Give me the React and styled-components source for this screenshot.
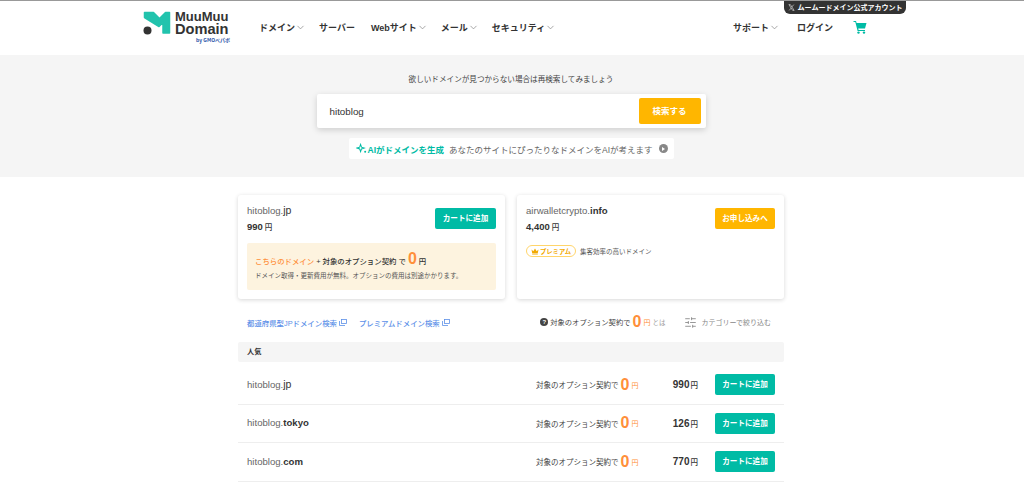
import React from "react";
import styled, { createGlobalStyle } from "styled-components";
import { ChevronDown, SlidersHorizontal } from "lucide-react";

const FONT = `"Noto Sans CJK JP", "Liberation Sans", sans-serif`;
const TEAL = "#00bba5";
const AMBER = "#ffb600";
const ORANGE = "#ff8f3a";

const GlobalStyle = createGlobalStyle`
  html, body { margin: 0; padding: 0; background: #fff; }
  body { font-family: "Liberation Sans", ${FONT}; color: #333; overflow: hidden; }
  * { box-sizing: border-box; }
`;

const Page = styled.div`
  width: 1024px;
  height: 484px;
  overflow: hidden;
  border-top: 1px solid #999;
`;

const Header = styled.header`
  position: relative;
  height: 54px;
  display: flex;
  align-items: center;
  padding: 0 157px 2px 142px;
`;

const XBanner = styled.a`
  position: absolute;
  top: 0;
  left: 784px;
  width: 122px;
  height: 13px;
  background: #333;
  border-radius: 0 0 6px 6px;
  color: #fff;
  font-size: 7px;
  font-weight: 700;
  line-height: 13px;
  text-align: center;
  white-space: nowrap;
`;

const LogoWrap = styled.div`
  display: flex;
  align-items: flex-start;
  justify-content: flex-start;
  width: 117px;
  height: 32px;
  gap: 4px;
  svg { margin-left: 1px; flex: none; }
`;

const LogoText = styled.div`
  display: flex;
  flex-direction: column;
  width: 55px;
  color: #333;
  font-weight: 700;
  font-family: "Liberation Sans", sans-serif;
`;

const LogoLine = styled.span`
  font-size: ${(p) => p.$size}px;
  line-height: 12px;
  white-space: nowrap;
`;

const LogoBy = styled.span`
  margin-top: 2px;
  font-size: 5px;
  line-height: 6px;
  text-align: right;
  white-space: nowrap;
  color: #2a54a8;
  font-family: ${FONT};
`;

const Nav = styled.nav`
  display: flex;
  align-items: center;
  gap: 16px;
  flex: 1;
`;

const NavItem = styled.a`
  display: flex;
  align-items: center;
  gap: 0;
  font-size: 9px;
  font-weight: 700;
  color: #333;
  white-space: nowrap;
  svg { color: #888; margin-right: -3px; }
`;

const NavRight = styled.nav`
  display: flex;
  align-items: center;
  gap: 20px;
`;

const SearchBand = styled.section`
  height: 122px;
  background: #f5f5f5;
  display: flex;
  flex-direction: column;
  align-items: center;
  padding: 19px 2px 0 0;
`;

const SearchLead = styled.p`
  margin: 0 0 8px;
  font-size: 7.6px;
  line-height: 12px;
  color: #444;
`;

const SearchBox = styled.div`
  width: 389px;
  height: 34px;
  background: #fff;
  border-radius: 2px;
  box-shadow: 0 2px 6px rgba(0, 0, 0, 0.16);
  display: flex;
  align-items: center;
  justify-content: space-between;
  padding: 0 5px 0 13px;
  font-size: 9.8px;
  color: #333;
`;

const Button = styled.button`
  border: 0;
  border-radius: 2px;
  background: ${(p) => (p.$amber ? AMBER : TEAL)};
  color: #fff;
  font-family: ${FONT};
  font-weight: 700;
  font-size: ${(p) => p.$size || 7.6}px;
  width: ${(p) => p.$w || 60}px;
  height: ${(p) => p.$h || 21}px;
  padding: 0 0 2px;
  white-space: nowrap;
  flex: none;
`;

const AiBanner = styled.div`
  margin-top: 10px;
  width: 325px;
  height: 21px;
  background: #fff;
  border-radius: 2px;
  display: flex;
  align-items: center;
  padding: 0 6px 0 7px;
  font-size: 8.5px;
  color: #666;
  white-space: nowrap;
`;

const AiLabel = styled.b`
  display: flex;
  align-items: center;
  gap: 1px;
  color: ${TEAL};
  margin-right: 5px;
`;

const AiArrow = styled.span`
  margin-left: auto;
  width: 9px;
  height: 9px;
  border-radius: 50%;
  background: #888;
  display: flex;
  align-items: center;
  justify-content: center;
  &::after {
    content: "";
    border-left: 3px solid #fff;
    border-top: 2px solid transparent;
    border-bottom: 2px solid transparent;
  }
`;

const Main = styled.main`
  width: 546px;
  margin: 18px 0 0 238px;
`;

const Cards = styled.div`
  display: grid;
  grid-template-columns: 267px 267px;
  gap: 12px;
`;

const Card = styled.article`
  height: 104px;
  border-radius: 3px;
  background: #fff;
  box-shadow: 0 1px 4px rgba(0, 0, 0, 0.16);
  padding: 8px 9px 0;
`;

const CardTop = styled.div`
  display: flex;
  justify-content: space-between;
  align-items: center;
  height: 30px;
`;

const Domain = styled.div`
  font-size: 9.6px;
  line-height: 14px;
  color: #666;
  b { color: #333; font-weight: 700; }
  ${(p) => p.$plain && "b { font-weight: 400; font-size: 10.5px; }"}
`;

const Price = styled.div`
  font-size: 9.5px;
  font-weight: 700;
  line-height: 14px;
  margin-top: 2px;
  color: #333;
  span { font-size: 7.5px; font-weight: 500; font-family: ${FONT}; margin-left: 2px; }
`;

const CardName = styled(Domain)`
  margin-top: 1px;
`;

const PromoBox = styled.div`
  margin-top: 10px;
  height: 47px;
  background: #fdf3df;
  border-radius: 2px;
  padding: 9px 8px;
`;

const PromoLine = styled.div`
  display: flex;
  align-items: baseline;
  font-size: 7.4px;
  line-height: 14px;
  font-weight: 500;
  color: #333;
  white-space: nowrap;
`;

const PromoAccent = styled.span`
  color: ${ORANGE};
  margin-right: 2px;
`;

const Zero = styled.b`
  color: ${ORANGE};
  font-size: ${(p) => p.$size || 16}px;
  font-family: "Liberation Sans", sans-serif;
  margin: 0 2px;
  line-height: 14px;
`;

const PromoNote = styled.p`
  margin: 2px 0 0;
  font-size: 6.5px;
  line-height: 10px;
  color: #555;
  white-space: nowrap;
`;

const PremiumRow = styled.div`
  display: flex;
  align-items: center;
  gap: 4px;
  margin-top: 12px;
  font-size: 6.5px;
  color: #555;
`;

const PremiumBadge = styled.span`
  display: flex;
  align-items: center;
  gap: 1px;
  height: 12px;
  padding: 0 4px;
  border: 1px solid #ffd56b;
  border-radius: 6px;
  color: #f2a900;
  font-size: 6.3px;
  font-weight: 700;
  background: #fff;
`;

const FilterBar = styled.div`
  display: flex;
  align-items: center;
  justify-content: space-between;
  height: 43px;
  padding: 3px 13px 0 9px;
`;

const LinkGroup = styled.div`
  display: flex;
  gap: 12px;
`;

const TextLink = styled.a`
  display: flex;
  align-items: center;
  gap: 2px;
  font-size: 7.4px;
  font-weight: 500;
  color: #5c90e8;
  white-space: nowrap;
`;

const FilterRight = styled.div`
  display: flex;
  align-items: center;
  gap: 19px;
`;

const ZeroHelp = styled.div`
  display: flex;
  align-items: center;
  font-size: 7.3px;
  color: #444;
  white-space: nowrap;
`;

const HelpIcon = styled.span`
  width: 8px;
  height: 8px;
  border-radius: 50%;
  background: #444;
  color: #fff;
  font-size: 6px;
  font-weight: 700;
  line-height: 8px;
  text-align: center;
  margin-right: 2px;
`;

const Yen = styled.span`
  color: ${ORANGE};
  font-size: 7px;
`;

const Muted = styled.span`
  color: #999;
  font-size: 6.5px;
  margin-left: 2px;
`;

const CategoryFilter = styled.div`
  display: flex;
  align-items: center;
  gap: 4px;
  font-size: 7px;
  color: #888;
  white-space: nowrap;
`;

const SectionLabel = styled.div`
  height: 20px;
  margin-bottom: 4px;
  background: #f5f5f5;
  border-radius: 2px;
  padding: 0 9px;
  font-size: 7.2px;
  font-weight: 700;
  line-height: 20px;
  color: #333;
`;

const Row = styled.div`
  display: flex;
  align-items: center;
  height: 38.5px;
  padding: 0 9px;
  border-bottom: 1px solid #eee;
`;

const RowDomain = styled(Domain)`
  flex: 1;
`;

const RowOption = styled.div`
  display: flex;
  align-items: center;
  width: 101px;
  font-size: 7.5px;
  color: #444;
  white-space: nowrap;
`;

const RowPrice = styled.div`
  width: 78px;
  text-align: right;
  padding-right: 17px;
  font-size: 10px;
  font-weight: 700;
  color: #333;
  white-space: nowrap;
  span { font-size: 7.5px; font-family: ${FONT}; font-weight: 500; margin-left: 1px; }
`;

const LogoMark = () => (
  <svg width="28" height="24" viewBox="-0.5 -0.5 28 24" aria-hidden="true">
    <path
      d="M1 1 H10 L16 7 L22 1 H26 V21.5 H19.5 V11 L15.5 15 L1 6 Z"
      fill="#22c3ad"
      stroke="#22c3ad"
      strokeWidth="1.5"
      strokeLinejoin="round"
    />
    <circle cx="4" cy="19" r="4" fill="#333" />
  </svg>
);

const CartIcon = () => (
  <svg width="14" height="14" viewBox="0 0 14 14" aria-hidden="true">
    <path d="M0.5 1 H3 L3.6 3 H13.5 L12 8.5 H5.2 L5.6 10 H12 V11 H4.6 L2.3 2 H0.5 Z" fill={TEAL} />
    <circle cx="5.5" cy="12.6" r="1.2" fill={TEAL} />
    <circle cx="11" cy="12.6" r="1.2" fill={TEAL} />
  </svg>
);

const XGlyph = () => (
  <svg width="7" height="7" viewBox="0 0 24 24" style={{ marginRight: 3, verticalAlign: -1 }} aria-hidden="true">
    <path d="M3 2h5l13 20h-5zM20 2l-7.5 8.5M4 22l7.5-8.5" stroke="#ccc" strokeWidth="2.5" fill="none" />
  </svg>
);

const Sparkle = () => (
  <svg width="11" height="11" viewBox="0 0 12 12" aria-hidden="true">
    <path d="M5 1.5 L6 4.5 L9 5.5 L6 6.5 L5 9.5 L4 6.5 L1 5.5 L4 4.5 Z" fill="none" stroke={TEAL} strokeWidth="1.1" />
    <circle cx="10" cy="9.5" r="1.1" fill={TEAL} />
  </svg>
);

const CrownIcon = () => (
  <svg width="8" height="7" viewBox="0 0 8 7" aria-hidden="true">
    <path d="M0.5 1.5 L2.3 3.2 L4 0.5 L5.7 3.2 L7.5 1.5 L6.8 5 H1.2 Z M1.2 5.6 H6.8 V6.5 H1.2 Z" fill="#f2a900" />
  </svg>
);

const ExternalIcon = () => (
  <svg width="8" height="7" viewBox="0 0 8 7" aria-hidden="true">
    <rect x="2.5" y="0.5" width="5" height="4" fill="none" stroke="#5c90e8" strokeWidth="0.8" />
    <path d="M0.5 2 V6.5 H6" fill="none" stroke="#5c90e8" strokeWidth="0.8" />
  </svg>
);

const Chevron = () => <ChevronDown size={11} strokeWidth={1.6} />;

const NAV = [
  ["ドメイン", true],
  ["サーバー", false],
  ["Webサイト", true],
  ["メール", true],
  ["セキュリティ", true],
];

const ROWS = [
  ["jp", "990"],
  ["tokyo", "126"],
  ["com", "770"],
];

export default function App() {
  return (
    <Page>
      <GlobalStyle />
      <Header>
        <XBanner><XGlyph />ムームードメイン公式アカウント</XBanner>
        <LogoWrap>
          <LogoMark />
          <LogoText>
            <LogoLine $size={13}>MuuMuu</LogoLine>
            <LogoLine $size={14.6}>Domain</LogoLine>
            <LogoBy>by GMOペパボ</LogoBy>
          </LogoText>
        </LogoWrap>
        <Nav>
          {NAV.map(([label, hasMenu]) => (
            <NavItem key={label}>{label}{hasMenu && <Chevron />}</NavItem>
          ))}
        </Nav>
        <NavRight>
          <NavItem>サポート<Chevron /></NavItem>
          <NavItem>ログイン</NavItem>
          <CartIcon />
        </NavRight>
      </Header>

      <SearchBand>
        <SearchLead>欲しいドメインが見つからない場合は再検索してみましょう</SearchLead>
        <SearchBox>
          hitoblog
          <Button $amber $w={62} $h={26} $size={8.5}>検索する</Button>
        </SearchBox>
        <AiBanner>
          <AiLabel><Sparkle />AIがドメインを生成</AiLabel>
          あなたのサイトにぴったりなドメインをAIが考えます
          <AiArrow />
        </AiBanner>
      </SearchBand>

      <Main>
        <Cards>
          <Card>
            <CardTop>
              <div>
                <CardName $plain>hitoblog.<b>jp</b></CardName>
                <Price>990<span>円</span></Price>
              </div>
              <Button $w={61}>カートに追加</Button>
            </CardTop>
            <PromoBox>
              <PromoLine>
                <PromoAccent>こちらのドメイン</PromoAccent>
                + 対象のオプション契約 で <Zero>0</Zero>円
              </PromoLine>
              <PromoNote>ドメイン取得・更新費用が無料。オプションの費用は別途かかります。</PromoNote>
            </PromoBox>
          </Card>
          <Card>
            <CardTop>
              <div>
                <CardName>airwalletcrypto.<b>info</b></CardName>
                <Price>4,400<span>円</span></Price>
              </div>
              <Button $amber>お申し込みへ</Button>
            </CardTop>
            <PremiumRow>
              <PremiumBadge><CrownIcon />プレミアム</PremiumBadge>
              集客効率の高いドメイン
            </PremiumRow>
          </Card>
        </Cards>

        <FilterBar>
          <LinkGroup>
            <TextLink>都道府県型JPドメイン検索<ExternalIcon /></TextLink>
            <TextLink>プレミアムドメイン検索<ExternalIcon /></TextLink>
          </LinkGroup>
          <FilterRight>
            <ZeroHelp>
              <HelpIcon>?</HelpIcon>対象のオプション契約で<Zero>0</Zero><Yen>円</Yen><Muted>とは</Muted>
            </ZeroHelp>
            <CategoryFilter>
              <SlidersHorizontal size={13} strokeWidth={1.6} />カテゴリーで絞り込む
            </CategoryFilter>
          </FilterRight>
        </FilterBar>

        <SectionLabel>人気</SectionLabel>
        {ROWS.map(([tld, price]) => (
          <Row key={tld}>
            <RowDomain $plain={tld === "jp"}>hitoblog.<b>{tld}</b></RowDomain>
            <RowOption>対象のオプション契約で<Zero>0</Zero><Yen>円</Yen></RowOption>
            <RowPrice>{price}<span>円</span></RowPrice>
            <Button>カートに追加</Button>
          </Row>
        ))}
      </Main>
    </Page>
  );
}
